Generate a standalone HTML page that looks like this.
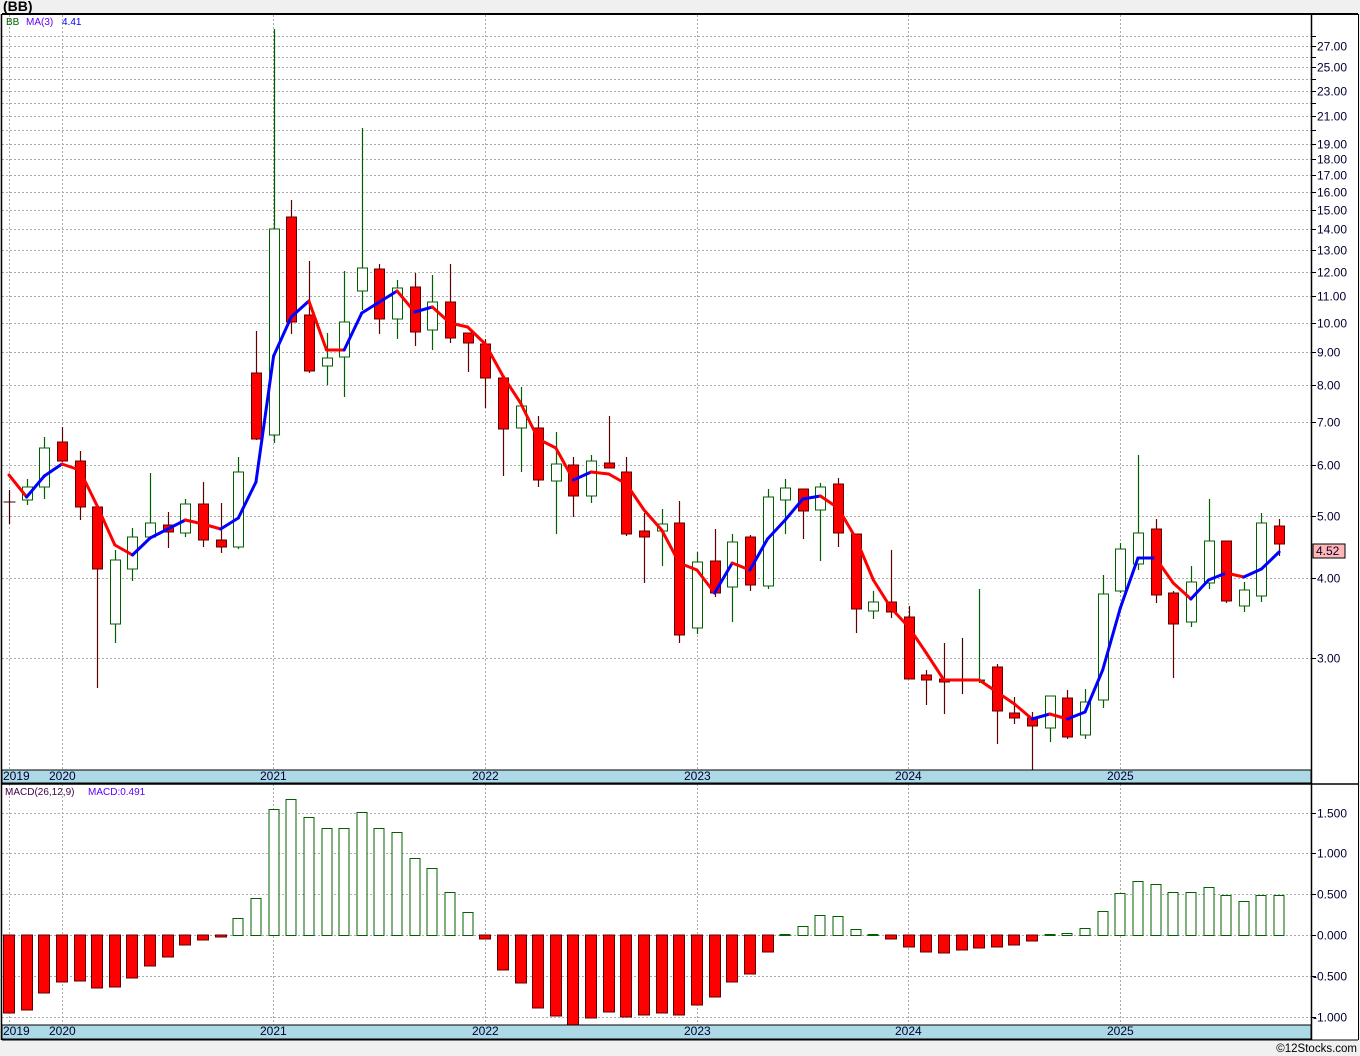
<!DOCTYPE html>
<html><head><meta charset="utf-8"><style>
html,body{margin:0;padding:0;background:#f0f0f0;width:1360px;height:1056px;overflow:hidden;font-family:"Liberation Sans",sans-serif;}
svg{position:absolute;left:0;top:0}
text{font-family:"Liberation Sans",sans-serif;font-size:12px;fill:#000030}
</style></head><body>
<svg id="s" width="1360" height="1056" xmlns="http://www.w3.org/2000/svg">
<rect x="2" y="14" width="1356" height="1026" fill="#fff"/>
<g id="grid"></g>
<g id="cand"></g>
<g id="ma"></g>
<g id="macd"></g>
<rect x="2" y="770" width="1309" height="13" fill="#add8e6" stroke="#000" stroke-width="1"/>
<rect x="2" y="1025" width="1309" height="14" fill="#add8e6" stroke="#000" stroke-width="1"/>
<line x1="2" y1="14" x2="1358" y2="14" stroke="#000" stroke-width="2"/>
<line x1="2" y1="784" x2="1358" y2="784" stroke="#000" stroke-width="1.5"/>
<line x1="1311.5" y1="14" x2="1311.5" y2="1040" stroke="#000" stroke-width="1.5"/>
<line x1="1.5" y1="14" x2="1.5" y2="1040" stroke="#000" stroke-width="1.5"/>
<line x1="1358.5" y1="14" x2="1358.5" y2="1040" stroke="#000" stroke-width="1"/>
<line x1="2" y1="1040" x2="1358" y2="1040" stroke="#000" stroke-width="1"/>
<text x="3" y="11" style="font-size:14px;font-weight:bold;fill:#000">(BB)</text>
<text x="6" y="25" style="font-size:10px;fill:#006000">BB</text>
<text x="26" y="25" style="font-size:10px;fill:#6000ff">MA(3)</text>
<text x="62" y="25" style="font-size:10px;fill:#0000ff">4.41</text>
<text x="5" y="795" style="font-size:10px;fill:#400040">MACD(26,12,9)</text>
<text x="88" y="795" style="font-size:10px;fill:#6000ff">MACD:0.491</text>
<g id="yl"></g>
<g style="font-size:11.5px">
<text x="3" y="780">2019</text><text x="49" y="780">2020</text><text x="260" y="780">2021</text><text x="472" y="780">2022</text><text x="684" y="780">2023</text><text x="895" y="780">2024</text><text x="1107" y="780">2025</text>
<text x="3" y="1035">2019</text><text x="49" y="1035">2020</text><text x="260" y="1035">2021</text><text x="472" y="1035">2022</text><text x="684" y="1035">2023</text><text x="895" y="1035">2024</text><text x="1107" y="1035">2025</text>
</g>
<rect x="1313" y="544" width="32" height="14" fill="#ffb6b6" stroke="#000"/>
<text x="1316" y="555" style="font-size:12px">4.52</text>
<text x="1357" y="1052" text-anchor="end" style="font-size:11.5px;fill:#000">©12Stocks.com</text>
</svg>
<script>
var NS="http://www.w3.org/2000/svg";
function el(p,t,a){var e=document.createElementNS(NS,t);for(var k in a)e.setAttribute(k,a[k]);p.appendChild(e);return e;}
function Y(p){return 46+(Math.log(27)-Math.log(p))*278.5;}
var g=document.getElementById('grid'),yl=document.getElementById('yl');
[9,62,273,485,697,908,1120].forEach(function(x){
 el(g,'line',{x1:x+.5,y1:15,x2:x+.5,y2:770,stroke:'#aaa','stroke-dasharray':'2,2'});
 el(g,'line',{x1:x+.5,y1:784,x2:x+.5,y2:1025,stroke:'#aaa','stroke-dasharray':'2,2'});
});
var labs={27:1,25:1,23:1,21:1,19:1,18:1,17:1,16:1,15:1,14:1,13:1,12:1,11:1,10:1,9:1,8:1,7:1,6:1,5:1,4:1,3:1};
for(var p=3;p<=28;p++){var y=Math.round(Y(p))+.5;
 el(g,'line',{x1:2,y1:y,x2:1311,y2:y,stroke:'#aaa','stroke-dasharray':'2,2'});
 el(g,'line',{x1:1311,y1:y,x2:1316,y2:y,stroke:'#000'});
 if(labs[p]){var t=el(yl,'text',{x:1317,y:y+4});t.textContent=p+'.00';}}
var ml=[[1.5,'1.500'],[1,'1.000'],[.5,'0.500'],[0,'0.000'],[-.5,'-0.500'],[-1,'-1.000']];
ml.forEach(function(m){var y=Math.round(935-m[0]*81.6)+.5;
 el(g,'line',{x1:2,y1:y,x2:1311,y2:y,stroke:'#aaa','stroke-dasharray':'2,2'});
 el(g,'line',{x1:1311,y1:y,x2:1316,y2:y,stroke:'#000'});
 var t=el(yl,'text',{x:m[0]<0?1313:1317,y:y+4});t.textContent=m[1];});
var C=[[490,524,502,503,'d'],[479,505,487,500,'g'],[437,499,448,487,'g'],[427,462,442,461,'r'],[451,520,461,507,'r'],[507,688,507,569,'r'],[550,643,560,624,'g'],[528,581,537,569,'g'],[473,538,523,537,'g'],[512,548,525,532,'r'],[499,537,504,533,'g'],[482,547,504,540,'r'],[503,553,540,547,'r'],[457,549,472,547,'g'],[331,440,373,439,'r'],[29,443,229,435,'g'],[200,334,217,322,'r'],[261,373,315,371,'r'],[333,385,358,366,'g'],
[271,397,322,357,'g'],[128,310,268,291,'g'],[264,334,269,319,'r'],[280,339,288,319,'g'],[273,346,287,332,'r'],[275,350,302,330,'g'],[264,343,302,338,'r'],[333,372,333,343,'r'],[339,408,344,378,'r'],[375,476,378,429,'r'],[387,472,406,428,'g'],[416,487,428,480,'r'],[432,534,464,481,'g'],[457,517,465,496,'r'],[455,503,461,496,'g'],[416,468,463,468,'r'],[457,536,472,534,'r'],[513,583,531,537,'r'],
[509,566,524,531,'g'],[501,643,523,635,'r'],[552,634,562,628,'g'],[529,597,561,593,'r'],[534,622,542,587,'g'],[535,591,537,585,'r'],[489,589,497,586,'g'],[479,534,488,500,'g'],[489,539,489,511,'r'],[483,561,487,510,'g'],[478,547,484,533,'r'],[534,633,534,609,'r'],[591,619,602,611,'g'],[550,618,602,612,'r'],[606,679,617,679,'r'],[670,705,675,680,'r'],[643,714,679,682,'r'],[638,694,680,681,'d'],
[589,683,680,681,'g'],[664,744,667,711,'r'],[697,724,713,718,'r'],[712,770,718,726,'r'],[696,742,696,728,'g'],[690,739,698,737,'r'],[689,739,702,735,'g'],[575,708,594,700,'g'],[543,593,549,591,'g'],[455,570,533,564,'g'],[519,603,529,595,'r'],[591,678,593,624,'r'],[566,627,582,622,'g'],[499,589,541,583,'g'],[541,603,541,601,'r'],[582,612,590,606,'g'],[513,602,523,596,'g'],[519,556,526,544,'r']];
var MA=[475,497,476,464,470,506,545,555,538,529,520,524,529,518,482,356,317,301,350,350,313,302,291,312,307,323,327,344,376,403,439,448,480,472,474,484,510,530,563,570,593,563,570,539,520,499,496,508,538,580,608,627,653,680,680,680,692,704,719,714,719,712,670,608,558,558,583,599,580,573,577,569,552];
var H=[1013,1010,993,982,981,988,987,978,966,957,945,940,937,918,898,809,799,817,828,828,812,828,832,858,868,892,912,939,970,983,1008,1016,1025,1018,1012,1017,1015,1013,1015,1005,997,982,974,952,934,926,915,916,929,934,939,947,952,953,950,948,947,945,941,934,933,928,911,893,881,884,892,892,887,895,901,895,895];
var cg=document.getElementById('cand'),mg=document.getElementById('ma'),hg=document.getElementById('macd');
function X(i){return 9+17.64*i;}
C.forEach(function(c,i){var x=Math.round(X(i))+.5;var col=c[4]=='r'?'#600000':(c[4]=='g'?'#006000':'#400000');
 el(cg,'line',{x1:x,y1:c[0],x2:x,y2:c[1],stroke:col,'stroke-width':1.2});
 if(c[4]=='d'){el(cg,'line',{x1:x-6,y1:c[2],x2:x+6,y2:c[2],stroke:col});return;}
 var h=Math.max(1,c[3]-c[2]);
 el(cg,'rect',{x:x-5,y:c[2],width:10,height:h,fill:c[4]=='r'?'#ff0000':'#fff',stroke:col,'stroke-width':1});
});
var prevUp=false;
for(var i=0;i<MA.length-1;i++){var up=MA[i+1]<MA[i]?true:(MA[i+1]>MA[i]?false:prevUp);prevUp=up;
 el(mg,'line',{x1:X(i),y1:MA[i],x2:X(i+1),y2:MA[i+1],stroke:up?'#0000ff':'#ff0000','stroke-width':3,'stroke-linecap':'round'});}
H.forEach(function(h,i){var x=Math.round(X(i))-5.5;
 if(h>935) el(hg,'rect',{x:x,y:935,width:11,height:h-935,fill:'#ff0000',stroke:'#600000'});
 else el(hg,'rect',{x:x+.5,y:h+.5,width:10,height:Math.max(0.5,935-h),fill:'#fff',stroke:'#006000'});
});
</script>
</body></html>
